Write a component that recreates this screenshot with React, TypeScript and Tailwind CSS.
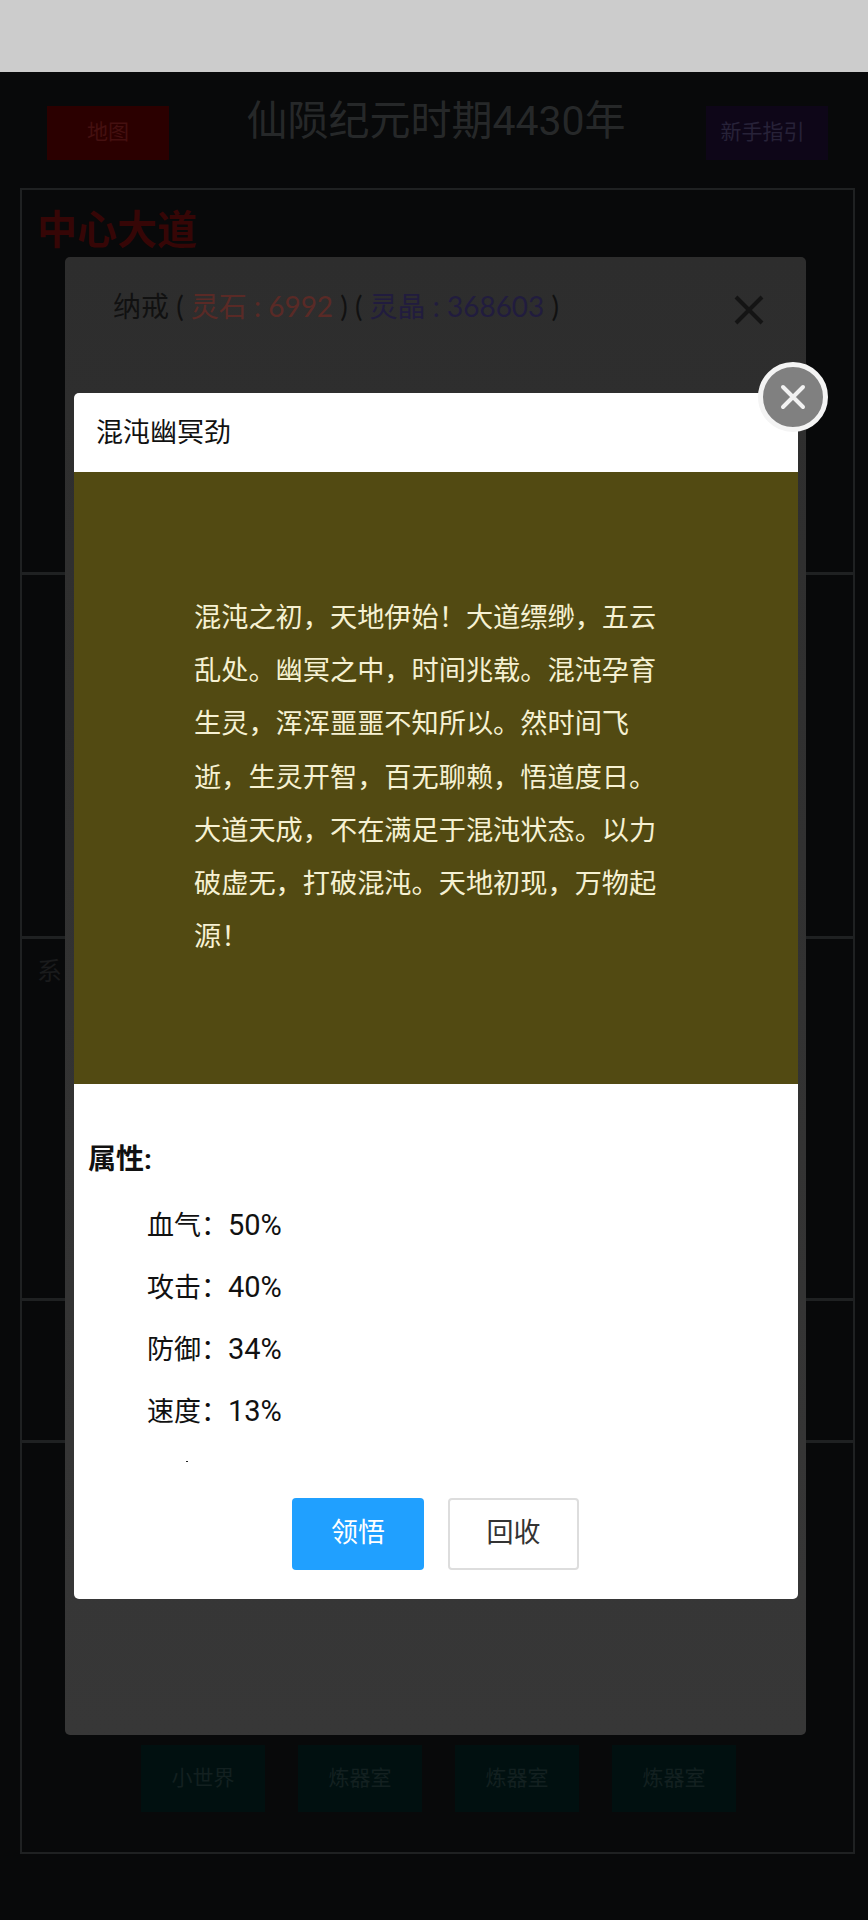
import React from 'react';

const stack = "font-['Roboto','Noto_Sans_CJK_SC',sans-serif]";

const attrs = [
  { label: '血气', value: '50%' },
  { label: '攻击', value: '40%' },
  { label: '防御', value: '34%' },
  { label: '速度', value: '13%' },
];

const rooms = ['小世界', '炼器室', '炼器室', '炼器室'];

function Backdrop() {
  return (
    <div className="h-[1848px] bg-[#08090a] pt-[28px]">
      <div className="flex items-start justify-between pl-[47px] pr-[40px] h-[88px]">
        <div className="w-[122px] h-[54px] mt-[6px] bg-[#2b0000] text-[#451010] text-[21px] flex items-center justify-center">
          地图
        </div>
        <div className="text-[41px] leading-[44px] text-[#262829] mr-[3px] -mt-[1px]">仙陨纪元时期4430年</div>
        <div className="w-[122px] h-[54px] mt-[6px] pr-[9px] bg-[#0e0618] text-[#272238] text-[21px] flex items-center justify-center">
          新手指引
        </div>
      </div>
      <div className="mx-[20px] w-[835px] h-[1666px] border-2 border-[#1f2122] flex flex-col">
        <div className="h-[385px] border-b-[3px] border-[#1f2122] pl-[15px] pt-[18px]">
          <div className="text-[40px] leading-[46px] font-bold text-[#360606]">中心大道</div>
        </div>
        <div className="h-[364px] border-b-[3px] border-[#1f2122]" />
        <div className="h-[362px] border-b-[3px] border-[#1f2122] pl-[15px] pt-[18px]">
          <div className="text-[25px] leading-[30px] text-[#1a1b1c]">系</div>
        </div>
        <div className="h-[142px] border-b-[3px] border-[#1f2122]" />
        <div className="flex-1 flex items-end gap-[33px] pl-[119px] pb-[40px]">
          {rooms.map((room, i) => (
            <div
              key={i}
              className="w-[124px] h-[67px] bg-[#011010] text-[#132020] text-[21px] flex items-center justify-center"
            >
              {room}
            </div>
          ))}
        </div>
      </div>
    </div>
  );
}

function RingDialog() {
  return (
    <div className="absolute left-[65px] top-[257px] w-[741px] h-[1478px] rounded-[5px] bg-linear-to-b from-[#2d2d2d] to-[#373737]">
      <div className="flex items-center justify-between pl-[48px] pr-[41px] h-[98px]">
        <div className="font-['Lato','Noto_Sans_CJK_SC',sans-serif] text-[28px] leading-[36px] text-[#111111] whitespace-pre">
          纳戒 ( <span className="text-[#5a2a26]">灵石 : 6992</span> ) ( <span className="text-[#211c3e]">灵晶 : 368603</span> )
        </div>
        <svg width="32" height="32" viewBox="0 0 32 32" fill="none" stroke="#141414" strokeWidth="4" className="mt-[8px]">
          <path d="M3 3 L29 29 M29 3 L3 29" />
        </svg>
      </div>
    </div>
  );
}

function SkillDialog() {
  return (
    <div className="absolute left-[74px] top-[393px] w-[724px] h-[1206px] rounded-[5px] bg-white flex flex-col">
      <div className="h-[79px] pl-[22px] pt-[2px] flex items-center text-[27px] text-[#111111] rounded-t-[5px]">混沌幽冥劲</div>
      <div className="h-[612px] bg-[#524a12] pl-[120px] pt-[120px]">
        <p className="w-[466px] text-[27.2px] leading-[53.2px] text-[#f6f1d2]">
          混沌之初，天地伊始！大道缥缈，五云乱处。幽冥之中，时间兆载。混沌孕育生灵，浑浑噩噩不知所以。然时间飞逝，生灵开智，百无聊赖，悟道度日。大道天成，不在满足于混沌状态。以力破虚无，打破混沌。天地初现，万物起源！
        </p>
      </div>
      <div className="flex-1 flex flex-col">
        <div className="h-[378px] pl-[14px] pt-[58px]">
          <div className="text-[28px] leading-[36px] font-bold text-[#111111]">属性:</div>
          <div className="pl-[59px] pt-[25px] flex flex-col gap-[17px]">
            {attrs.map((attr) => (
              <div key={attr.label} className="text-[27px] leading-[44px] text-[#111111] whitespace-pre">
                {attr.label}：<span className="text-[29px]">{attr.value}</span>
              </div>
            ))}
            <div className="w-[2px] h-[1px] bg-[#222222] ml-[39px] mt-[10px]" />
          </div>
        </div>
        <div className="flex justify-center gap-[24px] pt-[36px] pr-[1px]">
          <div className="w-[132px] h-[72px] rounded-[4px] bg-[#20a0ff] text-white text-[27px] flex items-center justify-center pb-[2px]">
            领悟
          </div>
          <div className="w-[131px] h-[72px] rounded-[4px] border-2 border-[#dddddd] bg-white text-[#333333] text-[27px] flex items-center justify-center pb-[2px]">
            回收
          </div>
        </div>
      </div>
      <div className="absolute -right-[30px] -top-[31px] w-[70px] h-[70px] rounded-full border-[5px] border-[#f4f4f4] bg-[#808080] flex items-center justify-center">
        <svg width="28" height="28" viewBox="0 0 28 28" fill="none" stroke="#f2f2f2" strokeWidth="4" strokeLinecap="round">
          <path d="M4 4 L24 24 M24 4 L4 24" />
        </svg>
      </div>
    </div>
  );
}

export default function App() {
  return (
    <div className={`relative w-[868px] h-[1920px] overflow-hidden bg-[#cccccc] pt-[72px] ${stack}`}>
      <Backdrop />
      <RingDialog />
      <SkillDialog />
    </div>
  );
}
